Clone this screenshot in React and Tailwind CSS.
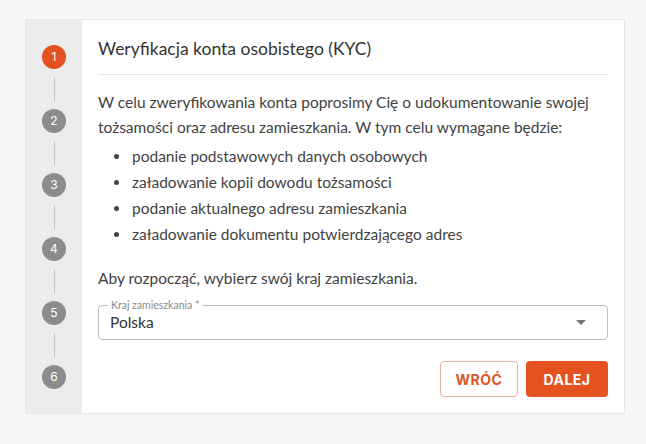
import React from "react";

const steps = [1, 2, 3, 4, 5, 6];

export default function App() {
  return (
    <div className="min-h-[444px] w-[646px] bg-[#f7f7f7] pt-[19px] pl-[25px]" style={{ fontFamily: "Lato, 'Noto Sans', sans-serif" }}>
      <div className="flex w-[600px] h-[395px] border border-[#e6e6e6] bg-white overflow-hidden">
        <div className="w-[56px] shrink-0 bg-[#ececec] flex flex-col items-center pt-[25px]">
          {steps.map((s, i) => (
            <React.Fragment key={s}>
              {i > 0 && <div className="w-px h-[24px] shrink-0 bg-[#c4c4c4] my-[8px]" />}
              <div className={`w-[24px] h-[24px] shrink-0 rounded-full flex items-center justify-center text-[12px] text-white ${s === 1 ? "bg-[#e4521f]" : "bg-[#8c8c8c]"}`} style={{ fontFamily: "Inter, sans-serif" }}>{s}</div>
            </React.Fragment>
          ))}
        </div>
        <div className="flex-1 px-[16px] pt-[15px] flex flex-col">
          <div className="border-b border-[#e6e6e6] pb-[11px] shrink-0">
            <h1 className="text-[17.5px] leading-[28px] text-[#333]">Weryfikacja konta osobistego (KYC)</h1>
          </div>
          <p className="mt-[15px] text-[15.5px] leading-[25px] text-[#424242] shrink-0">
            W celu zweryfikowania konta poprosimy Cię o udokumentowanie swojej tożsamości oraz adresu zamieszkania. W tym celu wymagane będzie:
          </p>
          <ul className="mt-[3px] text-[15.5px] leading-[26px] text-[#424242] shrink-0">
            {["podanie podstawowych danych osobowych", "załadowanie kopii dowodu tożsamości", "podanie aktualnego adresu zamieszkania", "załadowanie dokumentu potwierdzającego adres"].map((t) => (
              <li key={t} className="flex items-center">
                <span className="w-[5px] h-[5px] rounded-full bg-[#424242] ml-[16px] mr-[13px]" />
                {t}
              </li>
            ))}
          </ul>
          <p className="mt-[19px] text-[15.5px] leading-[25px] text-[#424242] shrink-0">Aby rozpocząć, wybierz swój kraj zamieszkania.</p>
          <div className="relative mt-[14px] h-[35px] shrink-0 border border-[#bdbdbd] rounded-[4px] flex items-center px-[11px]">
            <span className="absolute -top-[8px] left-[9px] bg-white px-[3px] text-[10.5px] leading-[14px] text-[#8a8a8a]">Kraj zamieszkania *</span>
            <span className="text-[15.5px] text-[#333]">Polska</span>
            <svg className="ml-auto mr-[10px]" width="10" height="5" viewBox="0 0 10 5"><path d="M0 0 L10 0 L5 5 Z" fill="#757575" /></svg>
          </div>
          <div className="mt-[21px] flex justify-end gap-[8px] shrink-0">
            <button className="w-[78px] h-[36px] rounded-[4px] border border-[#eab09b] text-[#d9562a] text-[14px] font-bold tracking-[0.5px]" style={{ fontFamily: "Inter, sans-serif" }}>WRÓĆ</button>
            <button className="w-[82px] h-[36px] rounded-[4px] bg-[#e4521f] text-white text-[14px] font-bold tracking-[0.5px]" style={{ fontFamily: "Inter, sans-serif" }}>DALEJ</button>
          </div>
        </div>
      </div>
    </div>
  );
}
